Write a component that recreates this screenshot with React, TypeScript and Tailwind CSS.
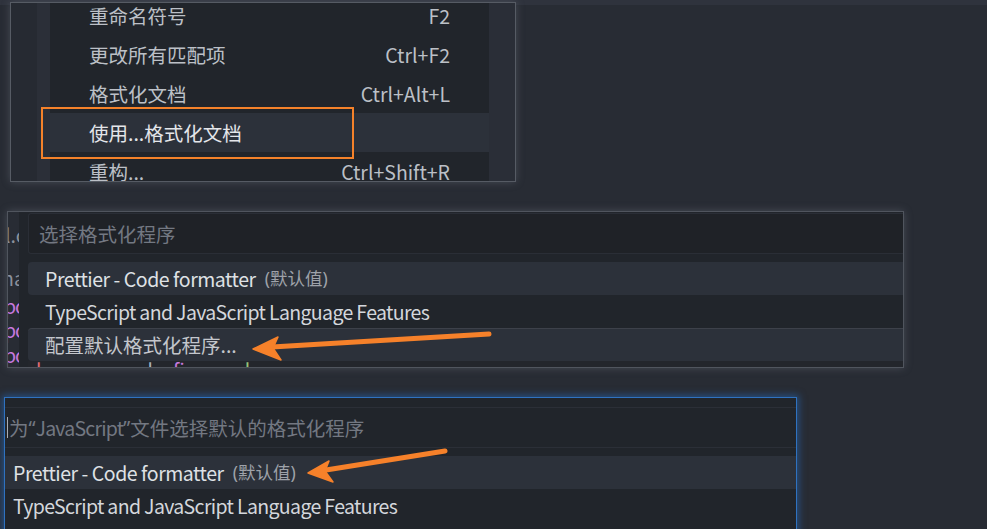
const font = { fontFamily: '"Noto Sans CJK SC", "Noto Sans", sans-serif' };
const latin = { fontFamily: '"Noto Sans", "Liberation Sans", sans-serif' };

interface MenuItem {
  label: string;
  keys?: string;
  active?: boolean;
}

const menuItems: MenuItem[] = [
  { label: '重命名符号', keys: 'F2' },
  { label: '更改所有匹配项', keys: 'Ctrl+F2' },
  { label: '格式化文档', keys: 'Ctrl+Alt+L' },
  { label: '使用...格式化文档', active: true },
  { label: '重构...', keys: 'Ctrl+Shift+R' },
];

const ContextMenu = () => (
  <div className="relative ml-[10px] mt-[2px] flex h-[180px] w-[506px] overflow-hidden border border-[#565b64] shadow-[0_0_8px_rgba(130,136,148,0.35)]">
    <div className="flex w-[39px] shrink-0">
      <div className="w-[26px] bg-[#262a32]" />
      <div className="flex-1 bg-[#2b2f38]" />
    </div>
    <div className="flex-1 overflow-hidden bg-[#21252b]">
      <div className="-mt-[7px]">
        {menuItems.map((item) => (
          <div
            key={item.label}
            className={`flex h-[39px] items-center justify-between px-[39px] text-[19.5px] leading-none ${
              item.active ? 'bg-[#2c313a] text-[#e4e6ea]' : 'text-[#bcc0c7]'
            }`}
          >
            <span>{item.label}</span>
            {item.keys && <span>{item.keys}</span>}
          </div>
        ))}
      </div>
    </div>
    <div className="w-[26px] shrink-0 bg-[#2a2e37]" />
    <div className="absolute left-[30px] top-[104px] h-[52px] w-[313px] border-2 border-[#f5822a]" />
  </div>
);

const CodeStrip = () => (
  <div className="w-[11px] shrink-0 overflow-hidden bg-[#282c34] text-[19.5px] leading-none whitespace-nowrap">
    <div className="mt-[13px] -ml-[3px] text-[#8b919c]">l.co</div>
    <div className="mt-[23px] -ml-[6px] text-[#8b919c]">name</div>
    <div className="mt-[9px] -ml-[4px] tracking-[-1px] text-[#c678dd]">port</div>
    <div className="mt-[4px] -ml-[4px] tracking-[-1px] text-[#c678dd]">port</div>
    <div className="mt-[6px] -ml-[4px] tracking-[-1px] text-[#c678dd]">port</div>
  </div>
);

const PrettierLabel = () => (
  <>
    <span className="tracking-[-0.45px] text-[#dfe1e5]">Prettier - Code formatter</span>
    <span className="ml-[9px] text-[17.5px] text-[#9ea2a9]">
      <span style={latin}>(</span>默认值<span style={latin}>)</span>
    </span>
  </>
);

const TsLabel = () => <span className="tracking-[-0.65px]">TypeScript and JavaScript Language Features</span>;

const FormatterPicker = () => (
  <div className="ml-[7px] mt-[29px] flex h-[157px] w-[897px] overflow-hidden border border-[#50555e] shadow-[0_0_8px_rgba(130,136,148,0.35)]">
    <CodeStrip />
    <div className="flex flex-1 flex-col overflow-hidden bg-[#21252b] pl-[9px]">
      <div className="mt-px flex h-[41px] shrink-0 items-center rounded-l-[3px] border border-r-0 border-[#2a2e36] bg-[#1f2227] pl-[10px] text-[19.5px] leading-none text-[#737882]">
        选择格式化程序
      </div>
      <div className="mt-[8px] flex h-[33px] shrink-0 items-center rounded-l-[4px] bg-[#2c313a] pl-[17px] text-[19.5px] leading-none">
        <PrettierLabel />
      </div>
      <div className="flex h-[33px] shrink-0 items-center pl-[17px] text-[19.5px] leading-none text-[#d4d7dc]">
        <TsLabel />
      </div>
      <div className="flex h-[33px] shrink-0 items-center rounded-l-[4px] border-t border-[#3d414a] bg-[#2c313a] pl-[17px] text-[19.5px] leading-none text-[#c3c6cc]">
        配置默认格式化程序...
      </div>
      <div className="h-[6px] overflow-hidden bg-[#23262c] pl-[8px] text-[19.5px] leading-none whitespace-nowrap">
        <div className="-mt-[1px]">
          <span className="text-[#e06c75]">by</span>
          <span className="ml-[40px] text-[#c678dd]">e</span>
          <span className="ml-[20px] text-[#abb2bf]">nd</span>
          <span className="ml-[20px] text-[#c678dd]">fi</span>
          <span className="ml-[60px] text-[#98c379]">l</span>
        </div>
      </div>
    </div>
  </div>
);

const LanguagePicker = () => (
  <div className="ml-[4px] mt-[29px] flex h-[140px] w-[793px] flex-col overflow-hidden border border-[#2f72c0] bg-[#21252b] shadow-[0_0_7px_2px_rgba(38,108,190,0.55)]">
    <div className="h-[10px] shrink-0 border-b border-[#2b2f37]" />
    <div className="flex h-[40px] shrink-0 items-center border-b border-[#2b2f37] pl-[2px] text-[19.5px] leading-none text-[#737882]">
      <span className="mr-px h-[21px] w-px bg-[#a9adb4]" />
      <span>为</span>
      <span style={latin}>“</span>
      <span className="tracking-[-0.8px]">JavaScript</span>
      <span style={latin}>”</span>
      <span>文件选择默认的格式化程序</span>
    </div>
    <div className="mt-[8px] flex h-[33px] shrink-0 items-center bg-[#2c313a] pl-[8px] text-[19.5px] leading-none">
      <PrettierLabel />
    </div>
    <div className="flex h-[33px] shrink-0 items-center pl-[8px] text-[19.5px] leading-none text-[#d4d7dc]">
      <TsLabel />
    </div>
  </div>
);

const Arrows = () => (
  <svg className="pointer-events-none absolute inset-0" width="987" height="529" viewBox="0 0 987 529">
    <g fill="#f6812a" stroke="#f6812a" strokeLinecap="round" strokeLinejoin="round">
      <line x1="489" y1="334" x2="272" y2="347" strokeWidth="5" />
      <path d="M253 349 L278 337 L273 348 L281 360 Z" strokeWidth="1.5" />
      <line x1="445" y1="451" x2="326" y2="470" strokeWidth="5" />
      <path d="M308 473 L329 461 L325 471 L333 482 Z" strokeWidth="1.5" />
    </g>
  </svg>
);

export default function App() {
  return (
    <div
      className="relative h-[529px] w-[987px] overflow-hidden bg-[linear-gradient(#2f333d_5px,#282c34_5px)]"
      style={font}
    >
      <div className="flex flex-col">
        <ContextMenu />
        <FormatterPicker />
        <LanguagePicker />
      </div>
      <Arrows />
    </div>
  );
}
